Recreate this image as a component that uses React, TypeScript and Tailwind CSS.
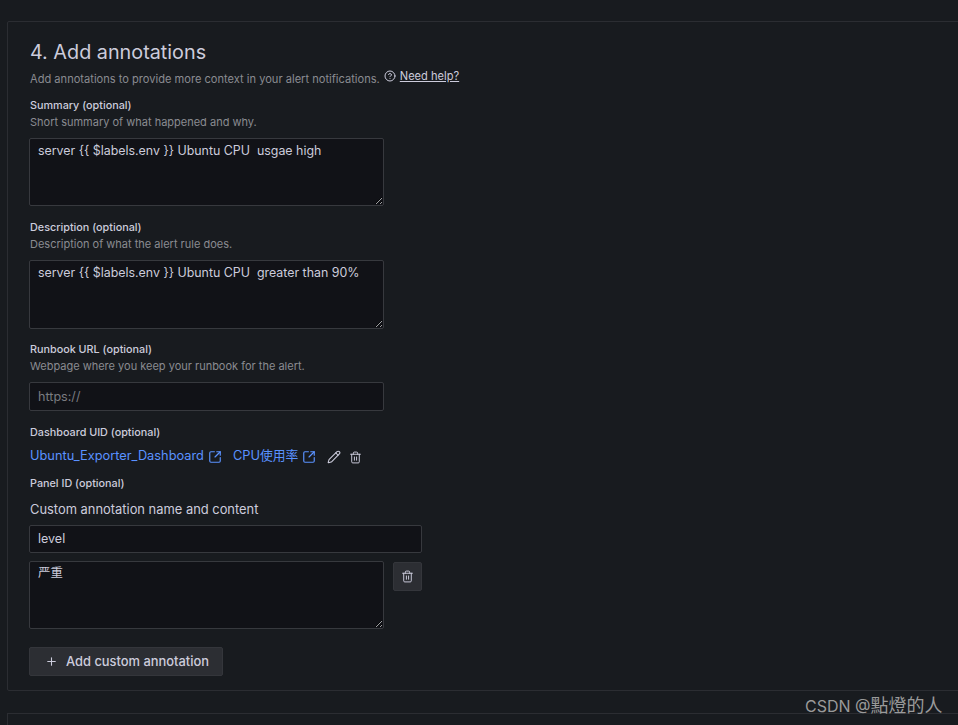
import { CircleHelp, Pencil, Plus, SquareArrowOutUpRight, Trash2 } from "lucide-react";

const textareaClass =
  "block w-[355px] rounded-[2px] border border-[#37393e] bg-[#111217] px-2 text-[12.4px] leading-[20px] text-[#ccccdc] outline-none";

function FieldLabel({ title, description }: { title: string; description?: string }) {
  return (
    <div className="flex flex-col">
      <span className="text-[10.8px] font-medium leading-[18px] text-[#ccccdc]">{title}</span>
      {description && <span className="-mt-[1px] text-[11px] leading-[16px] text-[#8a8b91]">{description}</span>}
    </div>
  );
}

function App() {
  return (
    <div className="relative h-[725px] w-[958px] overflow-hidden bg-[#181b1f] font-['Inter','Noto_Sans_CJK_SC',sans-serif]">
      <div className="ml-[7px] mt-[21px] h-[670px] w-[1000px] rounded-[2px] border border-[#2b2d32] pl-[21px] pt-[16px]">
        <h3 className="pl-[1px] text-[19.8px] font-normal leading-[28px] text-[#ccccdc]">4. Add annotations</h3>

        <div className="mt-[5px] flex items-start pl-[1px]">
          <span className="text-[11.1px] leading-[16px] text-[#8a8b91]">
            Add annotations to provide more context in your alert notifications.
          </span>
          <CircleHelp className="ml-[4px] mt-[-1px] h-3 w-3 text-[#ccccdc]" strokeWidth={2} />
          <a className="ml-[4px] -mt-[3px] text-[11.1px] leading-[16px] text-[#ccccdc] underline">Need help?</a>
        </div>

        <div className="mt-[10px] pl-[1px]">
          <FieldLabel title="Summary (optional)" description="Short summary of what happened and why." />
        </div>
        <textarea
          readOnly
          className={`mt-[8px] h-[68px] py-[2px] ${textareaClass}`}
          defaultValue="server {{ $labels.env }} Ubuntu CPU  usgae high"
        />

        <div className="mt-[13px] pl-[1px]">
          <FieldLabel title="Description (optional)" description="Description of what the alert rule does." />
        </div>
        <textarea
          readOnly
          className={`mt-[8px] h-[69px] py-[2px] ${textareaClass}`}
          defaultValue="server {{ $labels.env }} Ubuntu CPU  greater than 90%"
        />

        <div className="mt-[12px] pl-[1px]">
          <FieldLabel title="Runbook URL (optional)" description="Webpage where you keep your runbook for the alert." />
        </div>
        <input
          readOnly
          placeholder="https://"
          className="mt-[8px] block h-[29px] w-[355px] rounded-[2px] border border-[#37393e] bg-[#111217] px-2 text-[12.6px] text-[#ccccdc] outline-none placeholder:text-[#7a7b80]"
        />

        <div className="mt-[13px] pl-[1px]">
          <FieldLabel title="Dashboard UID (optional)" />
        </div>
        <div className="mt-[2px] flex h-[24px] items-center pl-[1px] text-[12.8px] text-[#5a92ff]">
          <a>Ubuntu_Exporter_Dashboard</a>
          <SquareArrowOutUpRight className="ml-[4px] mt-[2px] h-[14px] w-[14px]" strokeWidth={2} />
          <a className="ml-[11px]">CPU使用率</a>
          <SquareArrowOutUpRight className="ml-[4px] mt-[2px] h-[14px] w-[14px]" strokeWidth={2} />
          <Pencil className="ml-[11px] mt-[2px] h-[14px] w-[14px] text-[#ccccdc]" strokeWidth={1.8} />
          <Trash2 className="ml-[8px] mt-[2px] h-[13px] w-[13px] text-[#ccccdc]" strokeWidth={1.8} />
        </div>

        <div className="mt-[7px] pl-[1px]">
          <FieldLabel title="Panel ID (optional)" />
        </div>

        <p className="mt-[7px] pl-[1px] text-[12.9px] leading-[20px] text-[#ccccdc]">Custom annotation name and content</p>

        <input
          readOnly
          defaultValue="level"
          className="mt-[5px] block h-[28px] w-[393px] rounded-[2px] border border-[#37393e] bg-[#111217] px-2 pb-[2px] text-[12.5px] text-[#ccccdc] outline-none"
        />

        <div className="mt-[8px] flex items-start">
          <textarea readOnly className={`h-[68px] py-[1px] ${textareaClass}`} defaultValue="严重" />
          <button className="ml-[9px] mt-[1px] flex h-[29px] w-[29px] items-center justify-center rounded-[2px] border border-[#34363b] bg-[#2c2e33] text-[#ccccdc]">
            <Trash2 className="h-[13px] w-[13px]" strokeWidth={1.8} />
          </button>
        </div>

        <button className="mt-[18px] flex h-[29px] w-[194px] items-center rounded-[2px] border border-[#34363b] bg-[#2c2e33] pl-[15px] text-[12.9px] font-medium text-[#ccccdc]">
          <Plus className="h-[13px] w-[13px]" strokeWidth={2} />
          <span className="ml-[8px]">Add custom annotation</span>
        </button>
      </div>

      <div className="ml-[7px] mt-[22px] h-[40px] w-[1000px] border border-[#2b2d32]" />

      <span className="absolute left-[805px] top-[695px] text-[16px] leading-[22px] text-[#9a9a9a]">
        CSDN @<span className="text-[18px]">點燈的人</span>
      </span>
    </div>
  );
}

export default App;
